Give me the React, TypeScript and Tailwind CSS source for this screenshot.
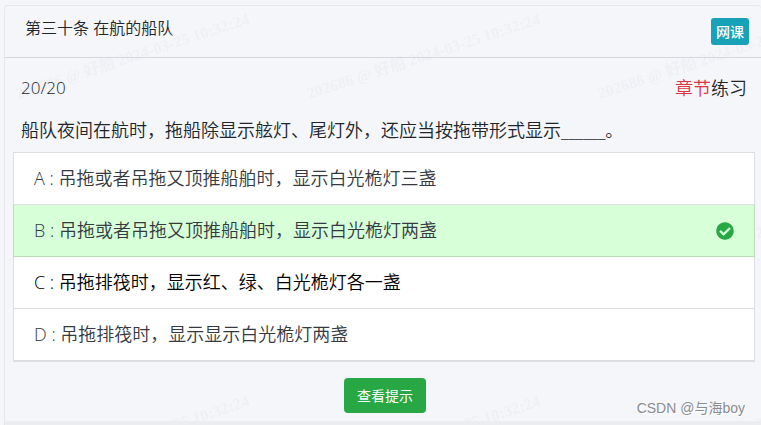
import { useState } from "react";
import { FaCheckCircle } from "react-icons/fa";
import clsx from "clsx";

type Option = {
  key: string;
  text: string;
};

const options: Option[] = [
  { key: "A", text: "吊拖或者吊拖又顶推船舶时，显示白光桅灯三盏" },
  { key: "B", text: "吊拖或者吊拖又顶推船舶时，显示白光桅灯两盏" },
  { key: "C", text: "吊拖排筏时，显示红、绿、白光桅灯各一盏" },
  { key: "D", text: "吊拖排筏时，显示显示白光桅灯两盏" },
];

const answer = "B";

const Watermark = () => {
  return (
    <svg className="absolute inset-0 w-full h-full" aria-hidden="true">
      <defs>
        <pattern id="mark" width="291" height="191" patternUnits="userSpaceOnUse">
          <text
            x="18"
            y="99"
            transform="rotate(-18 18 99)"
            className="text-[16px] font-bold font-['Liberation_Serif','Noto_Sans_CJK_SC',serif] fill-[#eef0f4]"
          >
            202686 @ 好船 2024-03-25 10:32:24
          </text>
        </pattern>
      </defs>
      <rect width="100%" height="100%" fill="url(#mark)" />
    </svg>
  );
};

const OptionItem = ({
  option,
  active,
  onSelect,
}: {
  option: Option;
  active: boolean;
  onSelect: () => void;
}) => {
  const correct = option.key === answer;

  return (
    <li>
      <button
        type="button"
        onClick={onSelect}
        className={clsx(
          "flex w-full items-center justify-between border-x border-b px-5 h-13 text-left text-lg font-[350]",
          correct ? "bg-[#d7ffd8] border-[#b9dcbb]" : "bg-white border-[#dcdee1]",
          active ? "text-black" : "text-[#343a40]"
        )}
      >
        <span className="pb-0.5">
          {option.key} : {option.text}
        </span>
        {correct && <FaCheckCircle className="size-[18px] text-[#28a745]" />}
      </button>
    </li>
  );
};

const App = () => {
  const [selected, setSelected] = useState("C");

  return (
    <div className="relative flex min-h-screen flex-col overflow-hidden bg-[#f4f6fa] pt-[5px] pl-1 text-[#212529] font-['Open_Sans','Noto_Sans_CJK_SC',sans-serif]">
      <Watermark />
      <main className="relative flex grow flex-col rounded-t border-t border-l border-[#e5e7eb]">
        <header className="flex h-13 items-center justify-between border-b border-[#d3d6da] pr-3 pl-5">
          <h1 className="pb-2 text-base font-[350]">第三十条 在航的船队</h1>
          <a
            href="#course"
            className="rounded-[3px] bg-[#17a2b8] px-[5px] py-[3px] text-sm leading-[21px] font-medium text-white"
          >
            网课
          </a>
        </header>

        <section className="px-2">
          <div className="flex items-center justify-between pt-4 pr-1.5 pl-2 text-lg leading-7 font-[350]">
            <span className="text-[17px]">20/20</span>
            <span>
              <span className="text-[#dc3545]">章节</span>练习
            </span>
          </div>
          <p className="px-2 pt-[15px] pb-[9px] text-lg leading-[26px] font-[350]">
            船队夜间在航时，拖船除显示舷灯、尾灯外，还应当按拖带形式显示______。
          </p>
          <ul className="mr-[-2px] border-t border-b border-[#dcdee1]">
            {options.map((option) => (
              <OptionItem
                key={option.key}
                option={option}
                active={option.key === selected}
                onSelect={() => setSelected(option.key)}
              />
            ))}
          </ul>
        </section>

        <div className="flex justify-center pt-4 pb-2 pl-1">
          <button
            type="button"
            className="rounded bg-[#28a745] px-[13px] py-[7px] text-sm leading-[21px] text-white"
          >
            查看提示
          </button>
        </div>
        <footer className="min-h-1 grow bg-[#ebedf1]" />
      </main>
      <span className="absolute right-4 bottom-[7px] text-sm text-[#8a8c90] font-['Liberation_Sans','Noto_Sans_CJK_SC',sans-serif] [text-shadow:1px_1px_0_#ffffff]">
        CSDN @与海boy
      </span>
    </div>
  );
};

export default App;
